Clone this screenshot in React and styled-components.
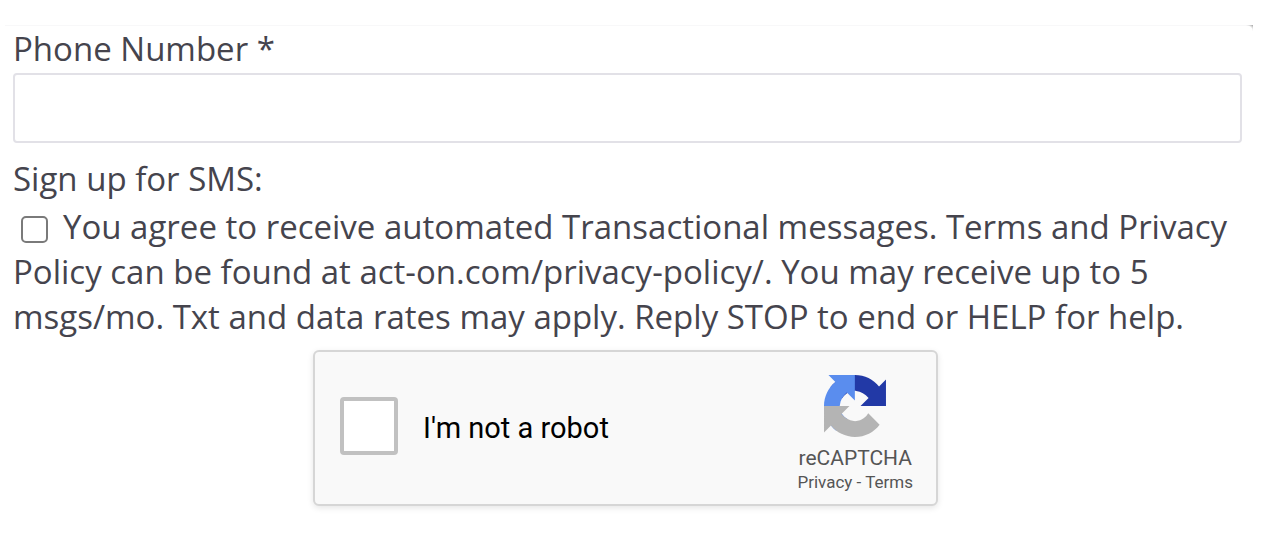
import React from "react";
import styled, { createGlobalStyle } from "styled-components";

const GlobalStyle = createGlobalStyle`
  *, *::before, *::after { box-sizing: border-box; }
  body {
    margin: 0;
    background: #ffffff;
    color: #45444d;
    font-family: "Open Sans", "Noto Sans", sans-serif;
    font-size: 33px;
    line-height: 46px;
  }
`;

const Panel = styled.form`
  position: relative;
  margin: 25px 13px 0 5px;
  padding: 0 11px 36px 8px;
  border-top: 1px solid #f8f8f9;
`;

const CornerShade = styled.span`
  position: absolute;
  top: -1px;
  right: 0;
  width: 8px;
  height: 6px;
  background: radial-gradient(farthest-corner at bottom left, transparent 65%, #a0a0a0 100%);
`;

const FieldLabel = styled.label`
  display: block;
`;

const TextInput = styled.input`
  display: block;
  width: 100%;
  height: 70px;
  margin-top: 1px;
  padding: 0 16px;
  border: 2px solid #e2e1e7;
  border-radius: 4px;
  background: #ffffff;
  color: inherit;
  font: inherit;
`;

const Consent = styled.fieldset`
  margin: 13px 0 0;
  padding: 0;
  border: 0;
`;

const Legend = styled.legend`
  padding: 0;
  margin-bottom: 2px;
`;

const ConsentLabel = styled.label`
  display: block;
  line-height: 45px;
`;

const TickBox = styled.input`
  appearance: none;
  width: ${({ $size }) => $size}px;
  height: ${({ $size }) => $size}px;
  border: ${({ $line }) => $line}px solid ${({ $color }) => $color};
  border-radius: ${({ $radius }) => $radius}px;
  background: #ffffff;
`;

const ConsentTick = styled(TickBox)`
  margin: 0 15px 0 8px;
  vertical-align: -4px;
`;

const CaptchaRow = styled.div`
  display: flex;
  justify-content: center;
  margin-top: 11px;
  padding-right: 4px;
`;

const Captcha = styled.div`
  display: flex;
  align-items: center;
  justify-content: space-between;
  width: 625px;
  max-width: 100%;
  height: 156px;
  padding: 0 23px 0 25px;
  border: 2px solid #d6d6d6;
  border-radius: 6px;
  background: #f9f9f9;
  box-shadow: 0 2px 6px rgba(0, 0, 0, 0.1);
  font-family: Roboto, sans-serif;
`;

const RobotLabel = styled.label`
  display: flex;
  align-items: center;
  gap: 25px;
  color: #000000;
  font-size: 29px;
  line-height: 36px;
`;

const RobotTick = styled(TickBox)`
  margin: 0 0 4px;
`;

const Brand = styled.div`
  display: flex;
  flex-direction: column;
  align-items: center;
  padding-top: 12px;
  color: #555555;
`;

const BrandName = styled.div`
  margin-top: 8px;
  font-size: 21px;
  line-height: 26px;
`;

const BrandLinks = styled.div`
  font-size: 17px;
  line-height: 22px;
  white-space: pre;
`;

const BrandLink = styled.a`
  color: inherit;
  text-decoration: none;
`;

function Logo() {
  return (
    <svg width="62" height="62" viewBox="0 0 64 64" aria-hidden="true">
      <path fill="#2239a6" d="M64 31.955l-.033-1.37V4.687l-7.16 7.16C50.948 4.674 42.033.093 32.05.093c-10.4 0-19.622 4.96-25.458 12.64l11.736 11.86a15.55 15.55 0 0 1 4.754-5.334c2.05-1.6 4.952-2.906 8.968-2.906.485 0 .86.057 1.135.163 4.976.393 9.288 3.14 12.828 7.124l-8.307 8.307L64 31.953" />
      <path fill="#5a8dee" d="M31.862.094l-1.37.033H4.594l7.16 7.16C4.58 13.147 0 22.06 0 32.046c0 10.4 4.96 19.622 12.64 25.458L24.5 45.768a15.55 15.55 0 0 1-5.334-4.754c-1.6-2.05-2.906-4.952-2.906-8.968 0-.485.057-.86.163-1.135.393-4.976 3.14-9.288 7.124-12.828l8.307 8.307L31.86.095" />
      <path fill="#b4b4b4" d="M.001 32.045l.033 1.37v25.898l7.16-7.16c5.86 7.173 14.774 11.754 24.76 11.754 10.4 0 19.622-4.96 25.458-12.64l-11.736-11.86a15.55 15.55 0 0 1-4.754 5.334c-2.05 1.6-4.952 2.906-8.968 2.906-.485 0-.86-.057-1.135-.163-4.976-.393-9.288-3.14-12.828-7.124l8.307-8.307c-10.522.04-22.4.066-26.295-.005" />
    </svg>
  );
}

export default function App() {
  return (
    <>
      <GlobalStyle />
      <Panel>
        <CornerShade />
        <FieldLabel htmlFor="phone">Phone Number *</FieldLabel>
        <TextInput id="phone" type="tel" required />
        <Consent>
          <Legend>Sign up for SMS:</Legend>
          <ConsentLabel>
            <ConsentTick type="checkbox" $size={27} $line={2} $radius={5} $color="#7a7a7a" />
            You agree to receive automated Transactional messages. Terms and Privacy
            Policy can be found at act-on.com/privacy-policy/. You may receive up to 5
            msgs/mo. Txt and data rates may apply. Reply STOP to end or HELP for help.
          </ConsentLabel>
        </Consent>
        <CaptchaRow>
          <Captcha>
            <RobotLabel>
              <RobotTick type="checkbox" $size={58} $line={4} $radius={4} $color="#c1c1c1" />
              I'm not a robot
            </RobotLabel>
            <Brand>
              <Logo />
              <BrandName>reCAPTCHA</BrandName>
              <BrandLinks>
                <BrandLink href="#privacy">Privacy</BrandLink>
                {" - "}
                <BrandLink href="#terms">Terms</BrandLink>
              </BrandLinks>
            </Brand>
          </Captcha>
        </CaptchaRow>
      </Panel>
    </>
  );
}
